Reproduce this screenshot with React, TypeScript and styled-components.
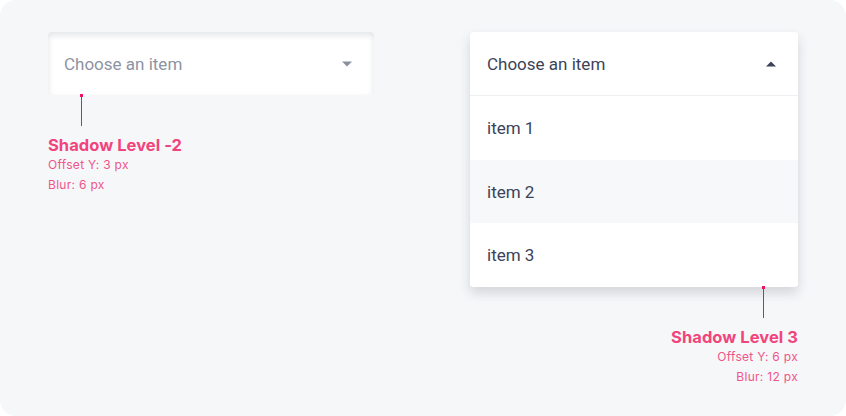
import React from 'react';
import styled, { createGlobalStyle } from 'styled-components';

const Global = createGlobalStyle`
  html, body {
    margin: 0;
    padding: 0;
    background: #ffffff;
  }
  * {
    box-sizing: border-box;
  }
`;

const Canvas = styled.div`
  width: 846px;
  height: 416px;
  background-color: #f6f7f9;
  border-radius: 16px;
  padding: 32px 48px;
  display: flex;
  justify-content: space-between;
  align-items: flex-start;
  font-family: Roboto, 'Liberation Sans', sans-serif;
`;

const Column = styled.div<{ $width: number; $align: 'start' | 'end' }>`
  width: ${props => props.$width}px;
  display: flex;
  flex-direction: column;
  align-items: ${props => (props.$align === 'end' ? 'flex-end' : 'flex-start')};
`;

const Field = styled.div`
  width: 100%;
  height: 63px;
  background: #ffffff;
  border-radius: 4px;
  box-shadow: inset 0 3px 6px rgba(20, 30, 50, 0.12);
  display: flex;
  align-items: center;
  justify-content: space-between;
  padding: 1px 22px 0 16px;
  font-size: 17px;
  color: #8d93a2;
`;

const Menu = styled.div`
  width: 100%;
  background: #ffffff;
  border-radius: 4px;
  box-shadow: 0 6px 12px rgba(30, 40, 60, 0.16);
  overflow: hidden;
`;

const Row = styled.div<{ $header?: boolean; $hover?: boolean }>`
  height: ${props => (props.$header ? '64px' : '63.5px')};
  display: flex;
  align-items: center;
  justify-content: space-between;
  padding: 1px 22px 0 17px;
  font-size: 17px;
  color: #3b4358;
  background: ${props => (props.$hover ? '#f7f8fa' : '#ffffff')};
  border-bottom: ${props => (props.$header ? '1px solid #eef0f3' : 'none')};
`;

const Pointer = styled.div<{ $offset: number; $side: 'left' | 'right' }>`
  position: relative;
  width: 1px;
  height: 31px;
  background: #ec1468;
  margin-${props => props.$side}: ${props => props.$offset}px;

  &::before {
    content: '';
    position: absolute;
    top: -1px;
    left: -1px;
    width: 3px;
    height: 3px;
    background: #ec1468;
  }
`;

const Caption = styled.div<{ $align: 'left' | 'right' }>`
  margin-top: 9px;
  text-align: ${props => props.$align};
  font-family: Inter, 'Noto Sans', sans-serif;
  color: #f2447c;
`;

const Title = styled.div`
  font-size: 16.5px;
  font-weight: 700;
  letter-spacing: 0.05px;
  line-height: 20px;
`;

const Note = styled.div`
  font-size: 12px;
  font-weight: 400;
  letter-spacing: 0.3px;
  line-height: 20px;
  color: #f0558a;
`;

const Caret = ({ up, color }: { up?: boolean; color: string }) => (
  <svg width="10" height="6" viewBox="0 0 10 6">
    <path d={up ? 'M0 5.5 L5 0.5 L10 5.5 Z' : 'M0 0.5 L10 0.5 L5 5.5 Z'} fill={color} />
  </svg>
);

export default function App() {
  return (
    <>
      <Global />
      <Canvas>
        <Column $width={326} $align="start">
          <Field>
            <span>Choose an item</span>
            <Caret color="#8a90a0" />
          </Field>
          <Pointer $side="left" $offset={33} />
          <Caption $align="left">
            <Title>Shadow Level -2</Title>
            <Note>Offset Y: 3 px</Note>
            <Note>Blur: 6 px</Note>
          </Caption>
        </Column>

        <Column $width={328} $align="end">
          <Menu>
            <Row $header>
              <span>Choose an item</span>
              <Caret up color="#3b4358" />
            </Row>
            <Row>item 1</Row>
            <Row $hover>item 2</Row>
            <Row>item 3</Row>
          </Menu>
          <Pointer $side="right" $offset={34} />
          <Caption $align="right">
            <Title>Shadow Level 3</Title>
            <Note>Offset Y: 6 px</Note>
            <Note>Blur: 12 px</Note>
          </Caption>
        </Column>
      </Canvas>
    </>
  );
}
